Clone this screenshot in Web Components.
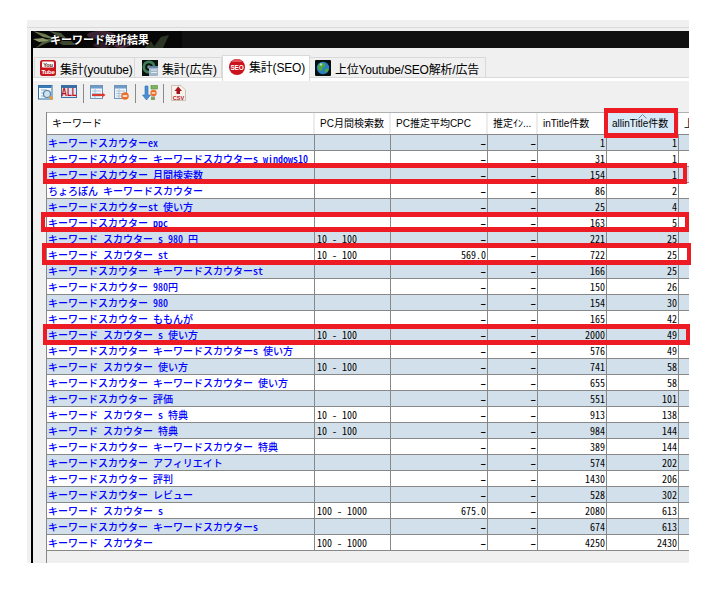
<!DOCTYPE html>
<html lang="ja">
<head>
<meta charset="utf-8">
<title>キーワード解析結果</title>
<style>
html,body{margin:0;padding:0;background:#fff}
body{position:relative;width:717px;height:596px;overflow:hidden;font-family:"Noto Sans CJK JP","Noto Sans",sans-serif}
</style>
</head>
<body>
<kw-window>
  <kw-titlebar slot="title">キーワード解析結果</kw-titlebar>
  <kw-tabs slot="tabs">
    <kw-tab w="101" pad="5" icon="yt">集計(youtube)</kw-tab>
    <kw-tab w="87" pad="7" icon="ad">集計(広告)</kw-tab>
    <kw-tab w="88" pad="6" icon="seo" active>集計(SEO)</kw-tab>
    <kw-tab w="176" pad="5" icon="globe">上位Youtube/SEO解析/広告</kw-tab>
  </kw-tabs>
  <kw-toolbar slot="toolbar"></kw-toolbar>
  <kw-grid slot="grid"></kw-grid>
</kw-window>
<red-box x="604" y="108" w="74" h="30"></red-box>
<red-box x="43" y="163" w="644" h="21"></red-box>
<red-box x="41" y="212" w="648" h="20"></red-box>
<red-box x="42" y="243" w="649" h="22"></red-box>
<red-box x="43" y="324" w="647" h="21"></red-box>
<script>
const FONT='"Noto Sans CJK JP","Noto Sans",sans-serif';
const UIFONT='"Liberation Sans","Noto Sans CJK JP",sans-serif';

class KwWindow extends HTMLElement{
  constructor(){super();this.attachShadow({mode:'open'}).innerHTML=`<style>
    :host{display:flex;flex-direction:column;width:662px;height:543px;margin:20px 0 0 27px;background:#f0f0f0;overflow:hidden;font-family:${FONT}}
    .strip{height:7px;flex:none;border-bottom:1px solid #d9d9d9}
    .gap{height:3px;flex:none}
    .frame{flex:1;min-height:0;margin-left:4px;border-left:2px solid #000;display:flex;flex-direction:column}
    .panel{flex:1;min-height:0;display:flex;flex-direction:column;border-top:1px solid #d9d9d9}
    .white{height:3px;flex:none;background:#fff}
  </style>
  <div class="strip"></div><div class="gap"></div>
  <div class="frame">
    <slot name="title"></slot>
    <slot name="tabs"></slot>
    <div class="panel">
      <div class="white"></div>
      <slot name="toolbar"></slot>
      <slot name="grid"></slot>
    </div>
  </div>`;}
}

class KwTitlebar extends HTMLElement{
  constructor(){super();this.attachShadow({mode:'open'}).innerHTML=`<style>
    :host{display:flex;flex:none;align-items:center;height:17px;background:#111;position:relative;overflow:hidden}
    .art{flex:none;width:149px;height:17px;display:flex;align-items:center;padding-left:17px;box-sizing:border-box;background:#070707;position:relative}
    svg{position:absolute;left:0;top:0}
    span{position:relative;font:700 11px ${FONT};color:#fff;line-height:17px;text-shadow:0 0 1px #000,1px 1px 0 #000}
  </style>
  <div class="art"><svg width="149" height="17" viewBox="0 0 149 17">
    <g fill="#6d7a4e">
      <path d="M0 0L12 3 24 9 10 6z"/><path d="M3 17L12 8 26 8 14 12z" fill="#4e5a38"/><path d="M16 0L28 2 34 8 24 5z" fill="#47523a"/>
      <path d="M22 10L36 9 44 14 30 14z" fill="#3c4630"/><path d="M0 8L10 7 16 10 6 11z" fill="#8b9668"/>
    </g>
    <g fill="#3d2433">
      <ellipse cx="68" cy="4" rx="14" ry="4"/><ellipse cx="88" cy="11" rx="11" ry="6" fill="#4a2a3c"/><ellipse cx="70" cy="14" rx="10" ry="3" fill="#2f1c29"/>
    </g>
    <g fill="#2c3524"><path d="M120 17L128 6 136 4 130 17z"/><path d="M112 17L118 10 122 17z"/></g>
  </svg><span><slot></slot></span></div>`;}
}

class KwTabs extends HTMLElement{
  constructor(){super();this.attachShadow({mode:'open'}).innerHTML=`<style>
    :host{display:flex;flex:none;height:29px;box-sizing:border-box;padding:7px 0 0 1px;align-items:flex-start}
  </style><slot></slot>`;}
}

const TAB_ICONS={
 yt:`<rect x="0" y="0" width="16" height="16" rx="2.500" fill="#c8161d"/><rect x="2" y="1.500" width="12" height="6" rx="1" fill="#fff"/><text x="8" y="6.600" font-size="5.600" font-weight="700" text-anchor="middle" fill="#5a1a1a" font-family="Liberation Sans">You</text><text x="8" y="13.800" font-size="6" font-weight="700" text-anchor="middle" fill="#fff" font-family="Liberation Sans">Tube</text>`,
 ad:`<rect width="16" height="16" fill="#0b1310"/><circle cx="7" cy="7" r="5.200" fill="none" stroke="#3f7d58" stroke-width="2.800"/><circle cx="7" cy="7" r="1.800" fill="#76a488"/><rect x="7" y="6" width="9" height="10" fill="#9fb6cb"/><rect x="7" y="6" width="9" height="2" fill="#5f82a6"/><path d="M9 10h6M9 12.500h6" stroke="#e3ebf2"/>`,
 seo:`<circle cx="8" cy="8" r="8" fill="#c9141d"/><path d="M3 1.800A8 8 0 0 1 13 1.800L13 3H3z" fill="#e2535a"/><text x="8" y="10.600" font-size="6.500" font-weight="700" text-anchor="middle" fill="#fff" font-family="Liberation Sans">SEO</text>`,
 globe:`<rect width="16" height="16" rx="1" fill="#05100c"/><circle cx="8" cy="8" r="6.200" fill="#2a7fc4"/><path d="M4 4.500c2-2 5-1.800 6 0s-1 2-2 3-1 4-2.600 3.400S3.300 8 3 6.500zM10 9c1.500-.8 3-.5 3.500.5s-1.500 3-2.500 3-1.500-2.800-1-3.500z" fill="#4fa83a"/><circle cx="6" cy="4.500" r="1.200" fill="#bfe3f5" opacity=".8"/>`
};
class KwTab extends HTMLElement{
  constructor(){super();
    const active=this.hasAttribute('active');
    const first=this.getAttribute('icon')==='yt';
    this.attachShadow({mode:'open'}).innerHTML=`<style>
    :host{display:flex;flex:none;box-sizing:border-box;width:${this.getAttribute('w')}px;align-items:center;
      border:1px solid #d9d9d9;border-bottom:0;padding-left:${this.getAttribute('pad')}px;
      ${active?'height:26px;background:#fff;position:relative;z-index:1;padding-bottom:4px;':'height:20px;margin-top:2px;background:#f0f0f0;padding-top:1px;'+(first?'':'border-left-width:0;')}
      font:12px ${UIFONT};letter-spacing:-.2px;color:#000;white-space:nowrap}
    svg{flex:none;margin-right:4px}
    </style><svg width="16" height="16" viewBox="0 0 16 16">${TAB_ICONS[this.getAttribute('icon')]}</svg><slot></slot>`;}
}

const TB={
 a:`<rect x=".5" y=".5" width="13.500" height="13.500" fill="#f4f8fc" stroke="#2f6ea8"/><rect x="1" y="1" width="12.500" height="2" fill="#3a7ab5"/><path d="M3 5h6M3 8h3M3 11h3" stroke="#8fb0cc"/><circle cx="9" cy="9" r="3.500" fill="#cfe2f1" stroke="#5b7f9e" stroke-width="1.200"/><path d="M11.700 11.700l2.800 2.800" stroke="#e89a2c" stroke-width="2.400"/>`,
 b:`<rect x=".5" y=".5" width="15" height="12" fill="#dfe8f1" stroke="#3b6ea3"/><rect x="1" y="1" width="14" height="2" fill="#3b6ea3"/><text x="8" y="9.200" transform="scale(1 1.250)" font-size="8" font-weight="700" text-anchor="middle" fill="#c4121a" font-family="Liberation Sans">ALL</text>`,
 c:`<rect x=".5" y=".5" width="12" height="13" fill="#f2f6fa" stroke="#6d95bc"/><rect x="1" y="1" width="11" height="2.500" fill="#6f9ac4"/><path d="M2 6h9M2 8.500h9M2 11h9M5 4v9" stroke="#a9c2d9"/><path d="M2 10h10" stroke="#dc3a2f" stroke-width="2"/><path d="M12 7.500l3.500 2.500-3.500 2.500z" fill="#dc3a2f"/>`,
 d:`<rect x=".5" y=".5" width="12" height="13" fill="#f2f6fa" stroke="#6d95bc"/><rect x="1" y="1" width="11" height="2.500" fill="#6f9ac4"/><path d="M2 6h9M2 8.500h9M2 11h9M5 4v9" stroke="#a9c2d9"/><circle cx="11" cy="11" r="3.800" fill="#e8702a"/><path d="M8.800 11h4.400" stroke="#fff" stroke-width="1.500"/>`,
 e:`<path d="M3 1h3v9h2.500L4.500 15 .5 10H3z" fill="#4a90d6" stroke="#2a6cb0" stroke-width=".6"/><rect x="9" y=".5" width="6.500" height="3.500" fill="#7cb45c" stroke="#55883c" stroke-width=".6"/><rect x="9" y="11.500" width="4" height="3.500" fill="#7fa36c"/><circle cx="11.500" cy="8" r="3.200" fill="#e8702a"/><path d="M9.700 8h3.600" stroke="#fff" stroke-width="1.200"/>`,
 f:`<path d="M.5.500h9.500l4.500 4.500v10.500H.5z" fill="#f6f3ec" stroke="#c9c2b4"/><path d="M7.200 1.500L11 6H9v3H5.500V6h-2z" fill="#a8141c"/><text x="7.500" y="14.600" font-size="5.500" font-weight="700" text-anchor="middle" fill="#b5121b" font-family="Liberation Sans">CSV</text>`
};
class KwToolbar extends HTMLElement{
  constructor(){super();
    const ic=(k,ml,w=16,h=16)=>`<svg style="margin-left:${ml}px" width="${w}" height="${h}" viewBox="0 0 16 16">${TB[k]}</svg>`;
    const sep=ml=>`<i style="margin-left:${ml}px"></i>`;
    this.attachShadow({mode:'open'}).innerHTML=`<style>
    :host{display:flex;flex:none;height:31px;box-sizing:border-box;padding:3px 0 0 5px;align-items:flex-start}
    svg{display:block;flex:none;margin-top:1px}
    i{display:block;flex:none;width:1px;height:19px;background:#8a8a8a}
    </style>${ic('a',0)}${ic('b',7)}${sep(6)}${ic('c',6)}${ic('d',8)}${sep(5)}${ic('e',6)}${sep(5)}${ic('f',7)}`;}
}

const COLS='268px 76px 97px 50px 69px 72px 1fr';
const DATA=[
['キーワードスカウターex','','–','1','1'],
['キーワードスカウター キーワードスカウターs windows10','','–','31','1'],
['キーワードスカウター 月間検索数','','–','154','1'],
['ちょろぽん キーワードスカウター','','–','86','2'],
['キーワードスカウターst 使い方','','–','25','4'],
['キーワードスカウター ppc','','–','163','5'],
['キーワード スカウター s 980 円','10 - 100','–','221','25'],
['キーワード スカウター st','10 - 100','569.0','722','25'],
['キーワードスカウター キーワードスカウターst','','–','166','25'],
['キーワードスカウター 980円','','–','150','26'],
['キーワードスカウター 980','','–','154','30'],
['キーワードスカウター ももんが','','–','165','42'],
['キーワード スカウター s 使い方','10 - 100','–','2000','49'],
['キーワードスカウター キーワードスカウターs 使い方','','–','576','49'],
['キーワード スカウター 使い方','10 - 100','–','741','58'],
['キーワードスカウター キーワードスカウター 使い方','','–','655','58'],
['キーワードスカウター 評価','','–','551','101'],
['キーワード スカウター s 特典','10 - 100','–','913','138'],
['キーワード スカウター 特典','10 - 100','–','984','144'],
['キーワードスカウター キーワードスカウター 特典','','–','389','144'],
['キーワードスカウター アフィリエイト','','–','574','202'],
['キーワードスカウター 評判','','–','1430','206'],
['キーワードスカウター レビュー','','–','528','302'],
['キーワード スカウター s','100 - 1000','675.0','2080','613'],
['キーワードスカウター キーワードスカウターs','','–','674','613'],
['キーワード スカウター','100 - 1000','–','4250','2430'],
];

class KwHead extends HTMLElement{
  constructor(){super();
    const heads=['キーワード','PC月間検索数','PC推定平均CPC','推定ｲﾝ...','inTitle件数','allinTitle件数','上'];
    this.attachShadow({mode:'open'}).innerHTML=`<style>
    :host{display:grid;grid-template-columns:${COLS};height:21px;background:#fff;border-bottom:1px solid #888;font:10px/22px ${UIFONT};color:#000;position:relative}
    div{padding-left:5px;border-right:2px solid #ececec;white-space:nowrap;overflow:hidden;box-sizing:border-box;position:relative}
    div:last-child{border-right:0}
    .sorted{background:#d9ebf9}
    svg{position:absolute;left:31px;top:1px}
    </style>`+heads.map((h,i)=>`<div class="${i==5?'sorted':''}">${i==5?'<svg width="9" height="5" viewBox="0 0 9 5"><path d="M.5 4.500L4.500.5l4 4" fill="none" stroke="#7a8a99"/></svg>':''}${h}</div>`).join('');}
}
class KwRow extends HTMLElement{
  constructor(){super();this.attachShadow({mode:'open'});}
  set row(r){
    const [k,pc,cpc,t,a]=r;
    const dash=s=>s==='–'?' d':'';
    this.shadowRoot.innerHTML=`<style>
    :host{display:grid;grid-template-columns:${COLS};height:16px;box-sizing:border-box;border-bottom:1px solid #888;background:var(--row-bg,#fff);font:400 10px/15px ${FONT};font-feature-settings:"hwid";color:#000}
    div{border-right:1px solid #888;box-sizing:border-box;padding:0 1px 0 2px;white-space:pre;overflow:hidden}
    div:last-child{border-right:0}
    .r{text-align:right}
    .d{font-weight:700}
    .k{color:#0000ff;padding-left:1px;font-weight:500}
    </style><div class="k">${k}</div><div>${pc}</div><div class="r${dash(cpc)}">${cpc}</div><div class="r d">–</div><div class="r">${t}</div><div class="r">${a}</div><div></div>`;
  }
}
class KwGrid extends HTMLElement{
  constructor(){super();
    this.attachShadow({mode:'open'}).innerHTML=`<style>
    :host{display:block;flex:1;min-height:0;margin-left:13px;border-left:1px solid #888}
    .top{height:1px;background:#b0b0b0}
    kw-row:nth-of-type(odd){--row-bg:#d2e0eb}
    </style><div class="top"></div><kw-head></kw-head>`;
    DATA.forEach(r=>{const e=document.createElement('kw-row');e.row=r;this.shadowRoot.appendChild(e);});
  }
}
class RedBox extends HTMLElement{
  constructor(){super();const g=n=>this.getAttribute(n);
    this.attachShadow({mode:'open'}).innerHTML=`<style>
    :host{display:block;position:absolute;box-sizing:border-box;left:${g('x')}px;top:${g('y')}px;width:${g('w')}px;height:${g('h')}px;border:5px solid #ed1c24;border-width:5px 4.500px;pointer-events:none}
    </style>`;}
}
customElements.define('kw-window',KwWindow);
customElements.define('kw-titlebar',KwTitlebar);
customElements.define('kw-tabs',KwTabs);
customElements.define('kw-tab',KwTab);
customElements.define('kw-toolbar',KwToolbar);
customElements.define('kw-head',KwHead);
customElements.define('kw-row',KwRow);
customElements.define('kw-grid',KwGrid);
customElements.define('red-box',RedBox);
</script>
</body>
</html>
